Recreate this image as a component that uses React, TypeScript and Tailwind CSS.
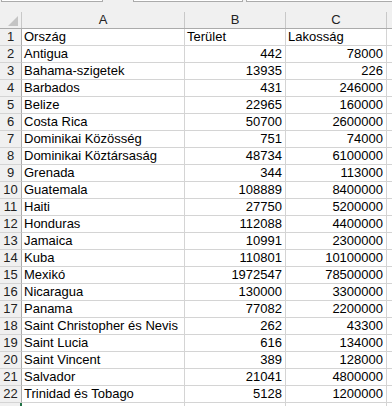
import React from "react";

const rows: [string, string, string][] = [
  ["Ország", "Terület", "Lakosság"],
  ["Antigua", "442", "78000"],
  ["Bahama-szigetek", "13935", "226"],
  ["Barbados", "431", "246000"],
  ["Belize", "22965", "160000"],
  ["Costa Rica", "50700", "2600000"],
  ["Dominikai Közösség", "751", "74000"],
  ["Dominikai Köztársaság", "48734", "6100000"],
  ["Grenada", "344", "113000"],
  ["Guatemala", "108889", "8400000"],
  ["Haiti", "27750", "5200000"],
  ["Honduras", "112088", "4400000"],
  ["Jamaica", "10991", "2300000"],
  ["Kuba", "110801", "10100000"],
  ["Mexikó", "1972547", "78500000"],
  ["Nicaragua", "130000", "3300000"],
  ["Panama", "77082", "2200000"],
  ["Saint Christopher és Nevis", "262", "43300"],
  ["Saint Lucia", "616", "134000"],
  ["Saint Vincent", "389", "128000"],
  ["Salvador", "21041", "4800000"],
  ["Trinidad és Tobago", "5128", "1200000"],
];

export default function App() {
  return (
    <div
      className="w-[392px] h-[406px] overflow-hidden bg-white text-[13px] text-black relative"
      style={{ fontFamily: '"Liberation Sans", Arial, sans-serif' }}
    >
      {/* top strip */}
      <div className="h-[2px] bg-[#f0f0f0] flex">
        <div className="ml-[1px] w-[102px] h-[2px] bg-white border-x border-b border-[#ababab]" />
        <div className="ml-[30px] w-[110px] h-[2px] bg-white border-x border-b border-[#ababab]" />
        <div className="ml-[3px] flex-1 h-[2px] bg-white border-l border-b border-[#ababab]" />
      </div>
      {/* header */}
      <div className="bg-[#f0f0f0] pt-[10px]">
        <div className="flex h-[17px] border-b border-[#ababab] leading-[16px] text-[#222]">
          <div className="w-[22px] shrink-0 border-r border-[#c8c8c8] relative">
            <svg className="absolute left-0 top-0" width="21" height="16" viewBox="0 0 21 16">
              <polygon points="8,14 18,14 18,4" fill="#c4c4c4" />
            </svg>
          </div>
          <div className="w-[163px] shrink-0 border-r border-[#c8c8c8] text-center">A</div>
          <div className="w-[101px] shrink-0 border-r border-[#c8c8c8] text-center">B</div>
          <div className="w-[101px] shrink-0 border-r border-[#c8c8c8] text-center">C</div>
          <div className="flex-1" />
        </div>
      </div>
      {/* rows */}
      {rows.map((r, i) => (
        <div key={i} className="flex h-[17px] leading-[17px]">
          <div className="w-[22px] shrink-0 bg-[#f0f0f0] border-r border-r-[#ababab] border-b border-b-[#d4d4d4] text-center text-[#222] leading-[16px]">
            {i + 1}
          </div>
          <div className="w-[163px] shrink-0 border-r border-b border-[#d4d4d4] pl-[2px] whitespace-nowrap overflow-hidden leading-[16px]">
            {r[0]}
          </div>
          <div
            className={
              "w-[101px] shrink-0 border-r border-b border-[#d4d4d4] whitespace-nowrap leading-[16px] " +
              (i === 0 ? "pl-[2px] text-left" : "pr-[3px] text-right")
            }
          >
            {r[1]}
          </div>
          <div
            className={
              "w-[101px] shrink-0 border-r border-b border-[#d4d4d4] whitespace-nowrap leading-[16px] " +
              (i === 0 ? "pl-[2px] text-left" : "pr-[3px] text-right")
            }
          >
            {r[2]}
          </div>
          <div className="flex-1 border-b border-[#d4d4d4]" />
        </div>
      ))}
      {/* partial row 23 */}
      <div className="flex h-[17px]">
        <div className="w-[22px] shrink-0 bg-[#f0f0f0] border-r border-[#ababab]" />
        <div className="w-[163px] shrink-0 border-r border-[#d4d4d4]" />
        <div className="w-[101px] shrink-0 border-r border-[#d4d4d4]" />
        <div className="w-[101px] shrink-0 border-r border-[#d4d4d4]" />
        <div className="flex-1" />
      </div>
      {/* active cell marker */}
      <div className="absolute left-[20px] top-[403px] w-[2px] h-[3px] bg-[#217346]" />
    </div>
  );
}
